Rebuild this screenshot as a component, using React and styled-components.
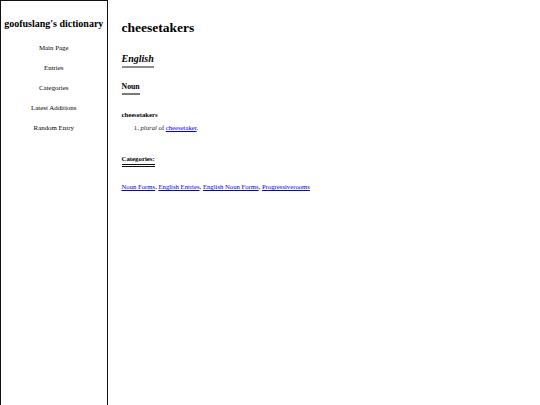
import React from "react";
import styled, { createGlobalStyle } from "styled-components";

const Global = createGlobalStyle`
  html, body {
    margin: 0;
    padding: 0;
    background: #fff;
  }
  body {
    font-family: "Liberation Serif", "Times New Roman", serif;
    color: #000;
  }
`;

const Page = styled.div`
  display: flex;
  align-items: stretch;
  min-height: 100vh;
`;

const Sidebar = styled.nav`
  box-sizing: border-box;
  width: 107.5px;
  flex-shrink: 0;
  border: 1px solid #111;
  border-bottom: none;
  padding-top: 17px;
  display: flex;
  flex-direction: column;
  align-items: center;
`;

const SiteTitle = styled.div`
  font-size: 10px;
  line-height: 12px;
  font-weight: bold;
  white-space: nowrap;
  margin-bottom: 14px;
`;

const NavList = styled.div`
  display: flex;
  flex-direction: column;
  align-items: center;
  gap: 12px;
`;

const NavItem = styled.a`
  font-size: 6.9px;
  line-height: 8px;
  color: #000;
  text-decoration: none;
`;

const Main = styled.main`
  flex: 1;
  padding: 20px 0 0 14px;
  display: flex;
  flex-direction: column;
  align-items: flex-start;
`;

const Title = styled.h1`
  font-size: 13.5px;
  line-height: 16px;
  margin: 0;
`;

const Heading = styled.div`
  margin-top: ${(p) => p.$top}px;
  font-weight: bold;
  font-style: ${(p) => (p.$italic ? "italic" : "normal")};
  font-size: ${(p) => p.$size}px;
  line-height: ${(p) => p.$lh}px;
  padding-bottom: 1px;
  border-bottom: ${(p) => p.$line};
`;

const Entry = styled.div`
  margin-top: 16px;
`;

const SubTitle = styled.div`
  font-size: 6.7px;
  line-height: 8px;
  font-weight: bold;
`;

const Senses = styled.ol`
  margin: 5px 0 0;
  padding-left: 19px;
  font-size: 6.7px;
  line-height: 8px;
  color: #222;
`;

const Link = styled.a`
  color: #0000ee;
  text-decoration: underline;
`;

const CatLinks = styled.div`
  margin-top: 16px;
  font-size: 6.7px;
  line-height: 8px;
`;

const navItems = ["Main Page", "Entries", "Categories", "Latest Additions", "Random Entry"];
const categories = ["Noun Forms", "English Entries", "English Noun Forms", "Progressiverooms"];

export default function App() {
  return (
    <>
      <Global />
      <Page>
        <Sidebar>
          <SiteTitle>goofuslang's dictionary</SiteTitle>
          <NavList>
            {navItems.map((n) => (
              <NavItem key={n} href="#">{n}</NavItem>
            ))}
          </NavList>
        </Sidebar>
        <Main>
          <Title>cheesetakers</Title>
          <Heading $top={17} $italic $size={10} $lh={12} $line="2.5px solid #8c8c8c">English</Heading>
          <Heading $top={14} $size={7.8} $lh={10} $line="2.5px solid #7a7a7a">Noun</Heading>
          <Entry>
            <SubTitle>cheesetakers</SubTitle>
            <Senses>
              <li>
                <i>plural</i> of <Link href="#">cheesetaker</Link>.
              </li>
            </Senses>
          </Entry>
          <Heading $top={23} $size={6.8} $lh={8} $line="3px double #111">Categories:</Heading>
          <CatLinks>
            {categories.map((c, i) => (
              <React.Fragment key={c}>
                <Link href="#">{c}</Link>
                {i < categories.length - 1 ? ", " : ""}
              </React.Fragment>
            ))}
          </CatLinks>
        </Main>
      </Page>
    </>
  );
}
